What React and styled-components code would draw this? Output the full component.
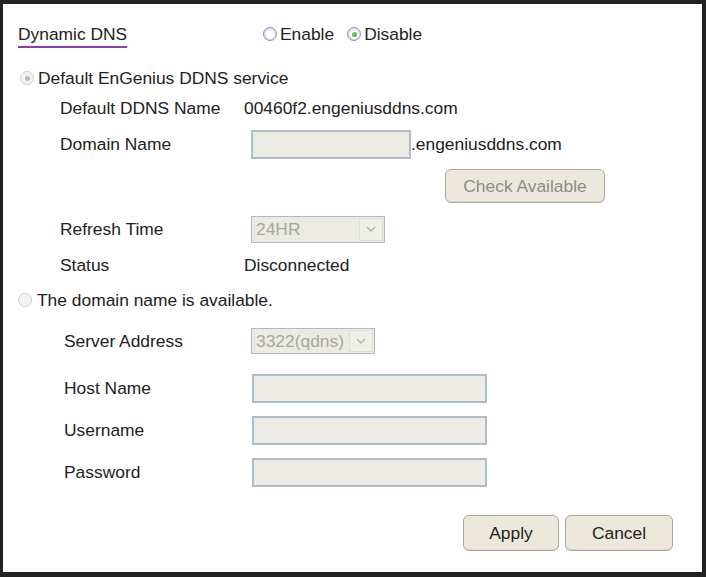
import React from "react";
import styled, { createGlobalStyle } from "styled-components";

const GlobalStyle = createGlobalStyle`
  html, body {
    margin: 0;
    padding: 0;
    background: #232323;
  }
  body {
    font-family: "Liberation Sans", Arial, sans-serif;
  }
`;

const Frame = styled.div`
  width: 706px;
  height: 577px;
  box-sizing: border-box;
  padding: 4px 4px 5px 3px;
  background: #232323;
`;

const Panel = styled.div`
  height: 100%;
  background: #fff;
  display: flex;
  flex-direction: column;
  font-size: 17.4px;
  color: #222;
`;

const Row = styled.div`
  display: flex;
  align-items: center;
  flex-shrink: 0;
  height: ${(p) => p.$h}px;
  padding-left: ${(p) => p.$indent || 0}px;
  justify-content: ${(p) => (p.$end ? "flex-end" : "flex-start")};
  padding-right: ${(p) => (p.$end ? 29 : 0)}px;
  gap: ${(p) => p.$gap || 0}px;
`;

const TitleCell = styled.div`
  width: 245px;
`;

const Title = styled.span`
  text-decoration: underline;
  text-decoration-color: #8a3db3;
  text-decoration-thickness: 1.5px;
  text-underline-offset: 6px;
`;

const Label = styled.div`
  width: ${(p) => p.$w}px;
  white-space: nowrap;
`;

const Value = styled.div`
  white-space: nowrap;
`;

const RadioOption = styled.label`
  display: inline-flex;
  align-items: center;
  gap: ${(p) => p.$gap || 3}px;
  margin-right: ${(p) => p.$mr || 0}px;
  white-space: nowrap;
`;

const Radio = styled.span`
  width: 14px;
  height: 14px;
  box-sizing: border-box;
  border-radius: 50%;
  flex-shrink: 0;
  display: inline-flex;
  align-items: center;
  justify-content: center;
  border: 1px solid ${(p) => (p.$disabled ? "#d2d0c6" : "#7f9cbb")};
  background: ${(p) =>
    p.$disabled
      ? "#f3f3ef"
      : "radial-gradient(circle at 60% 65%, #ffffff 30%, #d9dfe7 100%)"};
  box-shadow: ${(p) => (p.$disabled ? "none" : "inset 0 0 0 1px #c9d6e4")};

  &::after {
    content: "";
    display: ${(p) => (p.$checked ? "block" : "none")};
    width: 5px;
    height: 5px;
    border-radius: 50%;
    background: ${(p) =>
      p.$disabled
        ? "#bdbcb4"
        : "radial-gradient(circle at 40% 40%, #7fe07f 0%, #24a524 80%)"};
  }
`;

const TextBox = styled.div`
  width: ${(p) => p.$w}px;
  height: 29px;
  box-sizing: border-box;
  margin-left: ${(p) => p.$ml}px;
  border: 2px solid #abbdcf;
  background: #ebebe4;
`;

const SelectBox = styled.div`
  width: ${(p) => p.$w}px;
  height: ${(p) => p.$h}px;
  box-sizing: border-box;
  margin-left: 7px;
  border: 1px solid #a6bcd3;
  background: #ebebe4;
  color: #a7a7a0;
  display: flex;
  align-items: center;
  justify-content: space-between;
  padding-left: 4px;
  padding-right: 1px;
`;

const SelectArrow = styled.span`
  width: 24px;
  height: calc(100% - 2px);
  box-sizing: border-box;
  border: 1px solid #deded6;
  background: #efefe9;
  display: flex;
  align-items: center;
  justify-content: center;
`;

const Button = styled.button`
  width: ${(p) => p.$w}px;
  height: ${(p) => p.$h}px;
  box-sizing: border-box;
  border: 1px solid #a9a89f;
  border-radius: 6px;
  background: #ece9dc;
  font-family: "Liberation Sans", Arial, sans-serif;
  font-size: 17.4px;
  color: ${(p) => (p.disabled ? "#8d8d88" : "#222")};
  padding: 0;
  box-shadow: inset 0 -1px 0 #dcd9cb;
`;

function Chevron() {
  return (
    <svg width="10" height="6" viewBox="0 0 10 6">
      <path d="M1 1 L5 5 L9 1" fill="none" stroke="#b0b0aa" strokeWidth="1.4" />
    </svg>
  );
}

export default function App() {
  return (
    <>
      <GlobalStyle />
      <Frame>
        <Panel>
          <Row $h={60} $indent={15}>
            <TitleCell>
              <Title>Dynamic DNS</Title>
            </TitleCell>
            <RadioOption $mr={13}>
              <Radio />
              Enable
            </RadioOption>
            <RadioOption>
              <Radio $checked />
              Disable
            </RadioOption>
          </Row>

          <Row $h={28} $indent={17}>
            <RadioOption $gap={4}>
              <Radio $checked $disabled />
              Default EnGenius DDNS service
            </RadioOption>
          </Row>

          <Row $h={32} $indent={57}>
            <Label $w={184}>Default DDNS Name</Label>
            <Value>00460f2.engeniusddns.com</Value>
          </Row>

          <Row $h={40} $indent={57}>
            <Label $w={184}>Domain Name</Label>
            <TextBox $w={160} $ml={7} />
            <Value>.engeniusddns.com</Value>
          </Row>

          <Row $h={44} $indent={442}>
            <Button $w={160} $h={34} disabled>
              Check Available
            </Button>
          </Row>

          <Row $h={42} $indent={57}>
            <Label $w={184}>Refresh Time</Label>
            <SelectBox $w={134} $h={27}>
              24HR
              <SelectArrow>
                <Chevron />
              </SelectArrow>
            </SelectBox>
          </Row>

          <Row $h={30} $indent={57}>
            <Label $w={184}>Status</Label>
            <Value>Disconnected</Value>
          </Row>

          <Row $h={40} $indent={15}>
            <RadioOption $gap={5}>
              <Radio $disabled />
              The domain name is available.
            </RadioOption>
          </Row>

          <Row $h={42} $indent={61}>
            <Label $w={180}>Server Address</Label>
            <SelectBox $w={124} $h={26}>
              3322(qdns)
              <SelectArrow>
                <Chevron />
              </SelectArrow>
            </SelectBox>
          </Row>

          <Row $h={52} $indent={61}>
            <Label $w={180}>Host Name</Label>
            <TextBox $w={235} $ml={8} />
          </Row>

          <Row $h={32} $indent={61}>
            <Label $w={180}>Username</Label>
            <TextBox $w={235} $ml={8} />
          </Row>

          <Row $h={52} $indent={61}>
            <Label $w={180}>Password</Label>
            <TextBox $w={235} $ml={8} />
          </Row>

          <Row $h={70} $end $gap={6}>
            <Button $w={96} $h={36}>
              Apply
            </Button>
            <Button $w={108} $h={36}>
              Cancel
            </Button>
          </Row>
        </Panel>
      </Frame>
    </>
  );
}
